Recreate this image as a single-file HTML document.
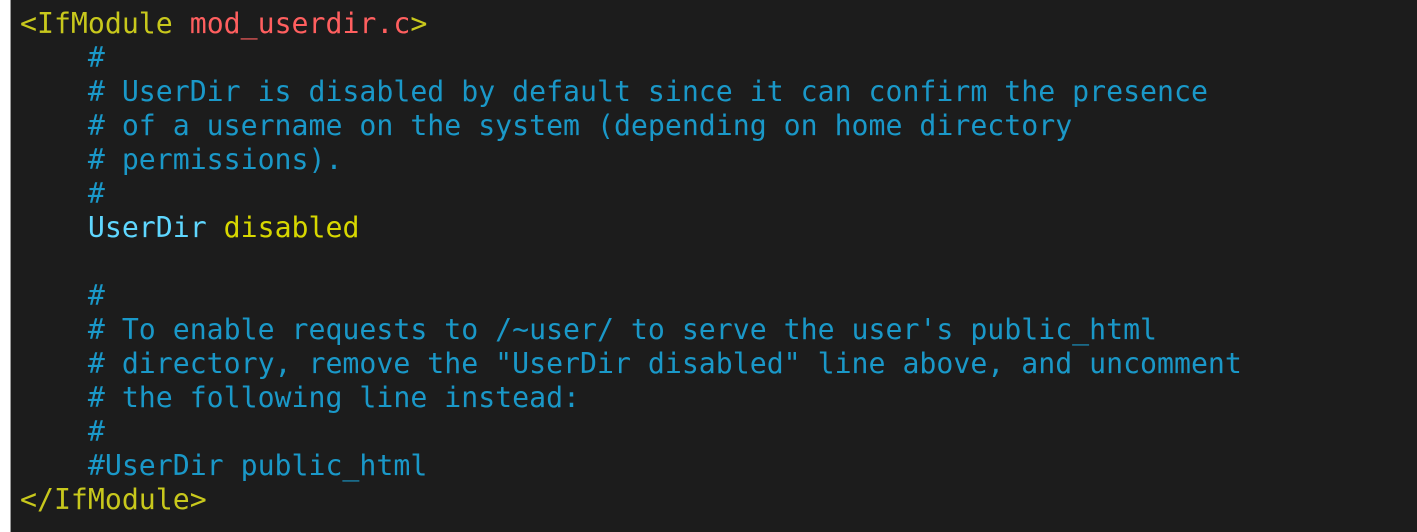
<!DOCTYPE html>
<html><head><meta charset="utf-8"><style>
html,body{margin:0;padding:0;width:1417px;height:532px;overflow:hidden;background:#1c1c1c;}
.l{position:absolute;left:0;top:0;width:10px;height:532px;background:#fff;border-right:1px solid #9a9a9a;}
pre{position:absolute;left:20px;top:7px;margin:0;font-family:"DejaVu Sans Mono","Liberation Mono",monospace;font-size:28.2px;line-height:34px;color:#1a98c8;letter-spacing:0;}
.y{color:#c8c81c}.r{color:#ff5f5f}.k{color:#5fd7ff}.d{color:#d7d700}
</style></head><body><div class="l"></div>
<pre><span class="y">&lt;IfModule</span> <span class="r">mod_userdir.c</span><span class="y">&gt;</span>
    #
    # UserDir is disabled by default since it can confirm the presence
    # of a username on the system (depending on home directory
    # permissions).
    #
    <span class="k">UserDir</span> <span class="d">disabled</span>

    #
    # To enable requests to /~user/ to serve the user's public_html
    # directory, remove the "UserDir disabled" line above, and uncomment
    # the following line instead:
    #
    #UserDir public_html
<span class="y">&lt;/IfModule&gt;</span></pre>
</body></html>
